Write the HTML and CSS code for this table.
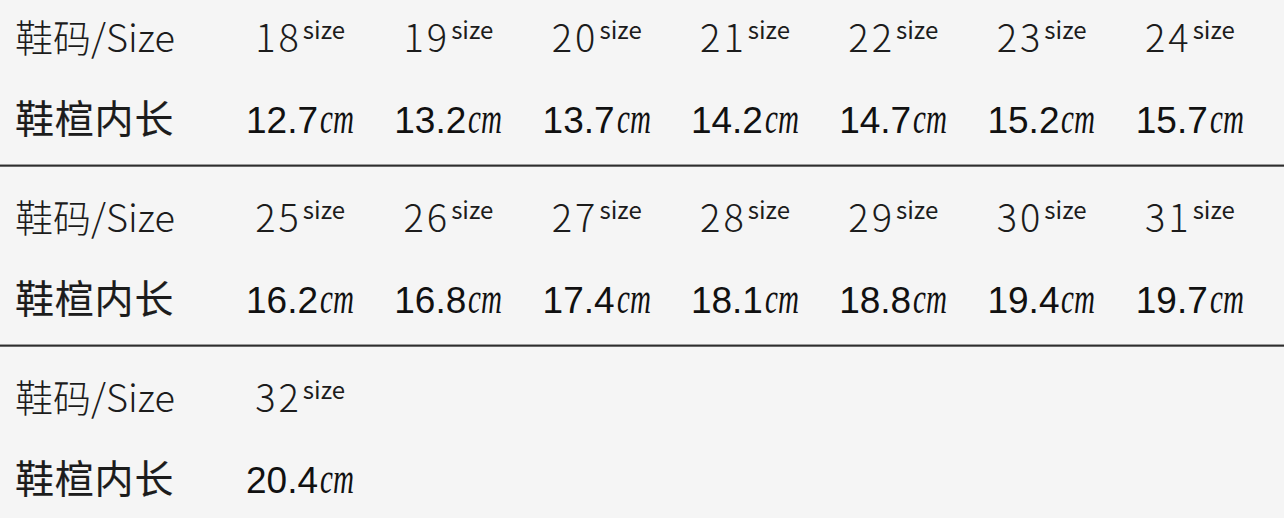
FILE: index.html
```html
<!DOCTYPE html>
<html lang="zh-CN">
<head>
<meta charset="utf-8">
<title>鞋码对照表</title>
<link rel="stylesheet" href="styles.css">
</head>
<body>
<main class="chart">
  <section class="block">
    <div class="row row-size">
      <div class="label label-size">鞋码/Size</div>
      <div class="cell"><span class="num">18</span><span class="sup">size</span></div>
      <div class="cell"><span class="num">19</span><span class="sup">size</span></div>
      <div class="cell"><span class="num">20</span><span class="sup">size</span></div>
      <div class="cell"><span class="num">21</span><span class="sup">size</span></div>
      <div class="cell"><span class="num">22</span><span class="sup">size</span></div>
      <div class="cell"><span class="num">23</span><span class="sup">size</span></div>
      <div class="cell"><span class="num">24</span><span class="sup">size</span></div>
    </div>
    <div class="row row-len">
      <div class="label label-len">鞋楦内长</div>
      <div class="cell"><span class="val">12.7</span><span class="cm">cm</span></div>
      <div class="cell"><span class="val">13.2</span><span class="cm">cm</span></div>
      <div class="cell"><span class="val">13.7</span><span class="cm">cm</span></div>
      <div class="cell"><span class="val">14.2</span><span class="cm">cm</span></div>
      <div class="cell"><span class="val">14.7</span><span class="cm">cm</span></div>
      <div class="cell"><span class="val">15.2</span><span class="cm">cm</span></div>
      <div class="cell"><span class="val">15.7</span><span class="cm">cm</span></div>
    </div>
  </section>
  <div class="rule"></div>
  <section class="block">
    <div class="row row-size">
      <div class="label label-size">鞋码/Size</div>
      <div class="cell"><span class="num">25</span><span class="sup">size</span></div>
      <div class="cell"><span class="num">26</span><span class="sup">size</span></div>
      <div class="cell"><span class="num">27</span><span class="sup">size</span></div>
      <div class="cell"><span class="num">28</span><span class="sup">size</span></div>
      <div class="cell"><span class="num">29</span><span class="sup">size</span></div>
      <div class="cell"><span class="num">30</span><span class="sup">size</span></div>
      <div class="cell"><span class="num">31</span><span class="sup">size</span></div>
    </div>
    <div class="row row-len">
      <div class="label label-len">鞋楦内长</div>
      <div class="cell"><span class="val">16.2</span><span class="cm">cm</span></div>
      <div class="cell"><span class="val">16.8</span><span class="cm">cm</span></div>
      <div class="cell"><span class="val">17.4</span><span class="cm">cm</span></div>
      <div class="cell"><span class="val">18.1</span><span class="cm">cm</span></div>
      <div class="cell"><span class="val">18.8</span><span class="cm">cm</span></div>
      <div class="cell"><span class="val">19.4</span><span class="cm">cm</span></div>
      <div class="cell"><span class="val">19.7</span><span class="cm">cm</span></div>
    </div>
  </section>
  <div class="rule"></div>
  <section class="block">
    <div class="row row-size">
      <div class="label label-size">鞋码/Size</div>
      <div class="cell"><span class="num">32</span><span class="sup">size</span></div>
    </div>
    <div class="row row-len">
      <div class="label label-len">鞋楦内长</div>
      <div class="cell"><span class="val">20.4</span><span class="cm">cm</span></div>
    </div>
  </section>
</main>
</body>
</html>
```

FILE: styles.css
```css
html, body {
  margin: 0;
  padding: 0;
  background: #f5f5f5;
}

.chart {
  width: 1284px;
  height: 518px;
  overflow: hidden;
  margin-top: -13px;
  color: #141414;
}

.block {
  height: 177px;
  box-sizing: border-box;
  padding: 2px 0 0 15px;
}

.row {
  display: grid;
  grid-template-columns: 211px repeat(7, 148.3px);
  align-items: baseline;
  height: 80px;
  line-height: 80px;
  white-space: nowrap;
}

.row-size {
  height: 87px;
}

.label {
  font-family: "Noto Sans CJK SC", sans-serif;
  color: #1c1c1c;
}

.label-size {
  font-size: 38px;
  font-weight: 300;
  letter-spacing: 0;
}

.label-len {
  font-size: 39px;
  font-weight: 400;
  letter-spacing: 0.8px;
  -webkit-text-stroke: 0.15px #1c1c1c;
}

.cell {
  text-align: center;
}

.num {
  font-family: "Noto Sans CJK SC", sans-serif;
  font-weight: 300;
  font-size: 38px;
  letter-spacing: 3px;
  color: #1c1c1c;
}

.sup {
  font-family: "Noto Sans CJK SC", sans-serif;
  font-weight: 400;
  font-size: 24px;
  vertical-align: 13px;
  margin-left: 1px;
  color: #1c1c1c;
}

.val {
  font-family: "Liberation Sans", Arial, sans-serif;
  font-size: 37px;
  color: #111;
}

.cm {
  display: inline-block;
  font-family: "Liberation Serif", "Times New Roman", serif;
  font-style: italic;
  font-size: 44px;
  transform: scaleX(0.66);
  transform-origin: left center;
  margin-left: 2px;
  margin-right: -17px;
  color: #111;
}

.rule {
  height: 3px;
  background: linear-gradient(#9a9a9a 0, #9a9a9a 1px, #2e2e2e 1px, #2e2e2e 2px, #6a6a6a 2px);
}
```
